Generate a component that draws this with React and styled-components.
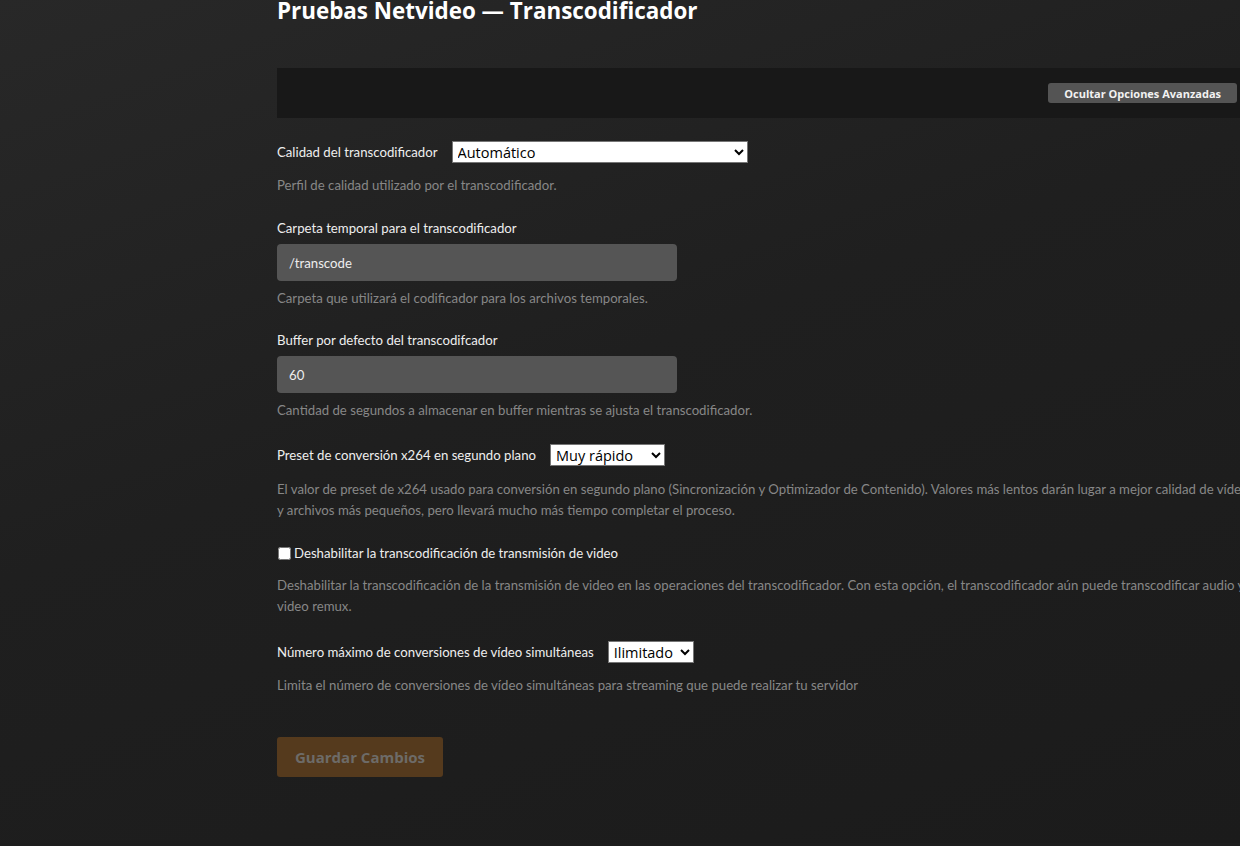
import React from "react";
import styled, { createGlobalStyle } from "styled-components";

const GlobalStyle = createGlobalStyle`
  html, body {
    margin: 0;
    padding: 0;
    overflow: hidden;
    background: #1d1d1d;
  }
  * {
    box-sizing: border-box;
  }
`;

const Page = styled.div`
  min-height: 846px;
  padding-left: 277px;
  background: linear-gradient(160deg, #282828 0%, #1f1f1f 45%, #1b1b1b 100%);
  font-family: Lato, "Open Sans", sans-serif;
  color: #eeeeee;
`;

const Content = styled.div`
  width: 972px;
  margin-top: -3px;
`;

const Title = styled.h1`
  margin: 0;
  font-family: "Open Sans", sans-serif;
  font-size: 22.4px;
  line-height: 28px;
  font-weight: 700;
  color: #ffffff;
`;

const Panel = styled.div`
  height: 50px;
  margin-top: 43px;
  padding-right: 12px;
  background: #181818;
  display: flex;
  align-items: center;
  justify-content: flex-end;
`;

const ToggleButton = styled.button`
  height: 20px;
  padding: 0 16px;
  border: none;
  border-radius: 3px;
  background: #545454;
  color: #f2f2f2;
  font-family: "Open Sans", sans-serif;
  font-size: 11px;
  font-weight: 700;
  cursor: pointer;
`;

const Form = styled.form`
  margin-top: 23px;
  display: flex;
  flex-direction: column;
`;

const Field = styled.div`
  display: flex;
  flex-direction: column;
  margin-bottom: ${(p) => p.$gap ?? 22}px;
`;

const InlineRow = styled.div`
  display: flex;
  align-items: center;
  gap: 14px;
`;

const Label = styled.label`
  font-size: 13.2px;
  line-height: 20px;
  color: #eeeeee;
`;

const CheckLabel = styled.label`
  display: flex;
  align-items: center;
  gap: 3px;
  font-size: 13.2px;
  line-height: 20px;
  color: #eeeeee;
`;

const Check = styled.input`
  margin: 0 0 0 1px;
  width: 13px;
  height: 13px;
`;

const Select = styled.select`
  height: 22px;
  width: ${(p) => p.$width}px;
  padding: 0 0 0 1px;
  border: 1px solid #767676;
  border-radius: 0;
  background: #ffffff;
  color: #000000;
  font-family: "Open Sans", sans-serif;
  font-size: 14.5px;
`;

const TextInput = styled.input`
  width: 400px;
  height: 37px;
  margin-top: 6px;
  padding: 0 12px;
  border: none;
  border-radius: 4px;
  background: #555555;
  color: #eeeeee;
  font-family: Lato, sans-serif;
  font-size: 13.2px;
  outline: none;
`;

const Help = styled.p`
  margin: ${(p) => p.$top ?? 7}px 0 0;
  font-size: 13.2px;
  line-height: 21px;
  color: #878787;
`;

const SaveButton = styled.button`
  align-self: flex-start;
  width: 166px;
  height: 40px;
  margin-top: 41px;
  border: none;
  border-radius: 3px;
  background: #553a1d;
  color: #6d6b68;
  font-family: "Open Sans", sans-serif;
  font-size: 15px;
  font-weight: 700;
`;

export default function App() {
  return (
    <>
      <GlobalStyle />
      <Page>
        <Content>
          <Title>Pruebas Netvideo — Transcodificador</Title>
          <Panel>
            <ToggleButton type="button">Ocultar Opciones Avanzadas</ToggleButton>
          </Panel>
          <Form onSubmit={(e) => e.preventDefault()}>
            <Field $gap={22}>
              <InlineRow>
                <Label>Calidad del transcodificador</Label>
                <Select $width={296} defaultValue="auto">
                  <option value="auto">Automático</option>
                </Select>
              </InlineRow>
              <Help $top={12}>Perfil de calidad utilizado por el transcodificador.</Help>
            </Field>
            <Field $gap={21}>
              <Label>Carpeta temporal para el transcodificador</Label>
              <TextInput defaultValue="/transcode" />
              <Help>Carpeta que utilizará el codificador para los archivos temporales.</Help>
            </Field>
            <Field $gap={23}>
              <Label>Buffer por defecto del transcodifcador</Label>
              <TextInput defaultValue="60" />
              <Help>Cantidad de segundos a almacenar en buffer mientras se ajusta el transcodificador.</Help>
            </Field>
            <Field $gap={22}>
              <InlineRow>
                <Label>Preset de conversión x264 en segundo plano</Label>
                <Select $width={115} defaultValue="veryfast">
                  <option value="veryfast">Muy rápido</option>
                </Select>
              </InlineRow>
              <Help $top={13}>
                El valor de preset de x264 usado para conversión en segundo plano (Sincronización y
                Optimizador de Contenido). Valores más lentos darán lugar a mejor calidad de vídeo y
                archivos más pequeños, pero llevará mucho más tiempo completar el proceso.
              </Help>
            </Field>
            <Field $gap={24}>
              <CheckLabel>
                <Check type="checkbox" />
                Deshabilitar la transcodificación de transmisión de video
              </CheckLabel>
              <Help $top={12}>
                Deshabilitar la transcodificación de la transmisión de video en las operaciones del
                transcodificador. Con esta opción, el transcodificador aún puede transcodificar audio y
                video remux.
              </Help>
            </Field>
            <Field $gap={0}>
              <InlineRow>
                <Label>Número máximo de conversiones de vídeo simultáneas</Label>
                <Select $width={86} defaultValue="unlimited">
                  <option value="unlimited">Ilimitado</option>
                </Select>
              </InlineRow>
              <Help $top={12}>
                Limita el número de conversiones de vídeo simultáneas para streaming que puede realizar
                tu servidor
              </Help>
            </Field>
            <SaveButton type="submit" disabled>
              Guardar Cambios
            </SaveButton>
          </Form>
        </Content>
      </Page>
    </>
  );
}
